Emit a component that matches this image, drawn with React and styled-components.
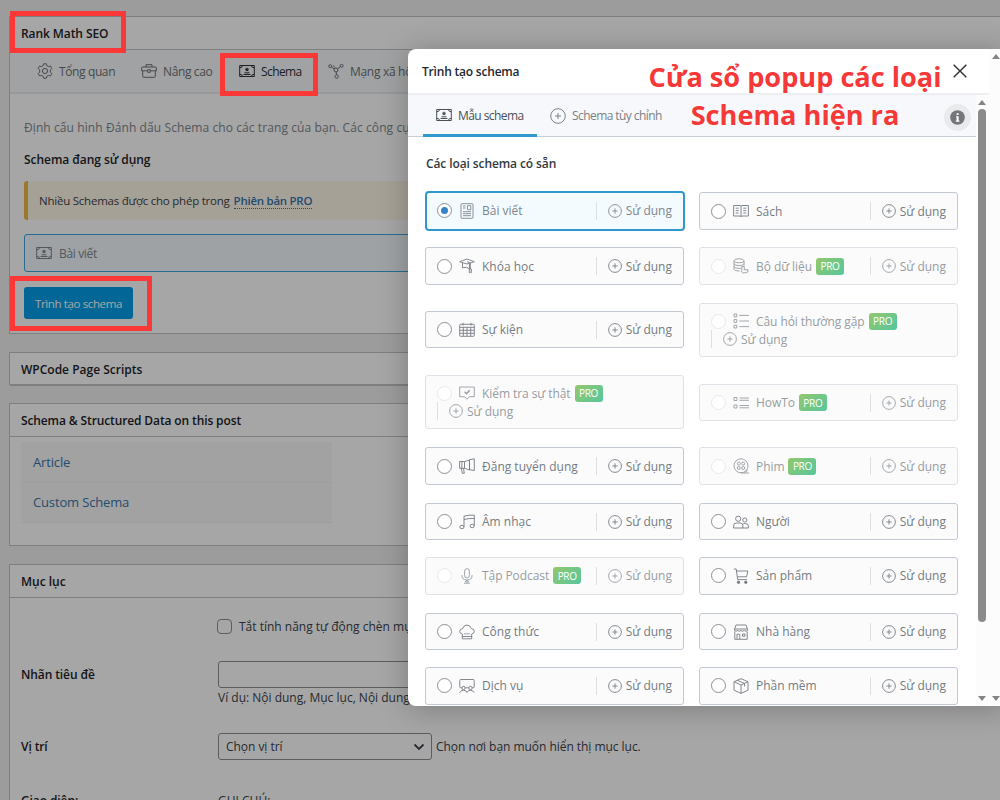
import React from 'react'
import styled, { createGlobalStyle, css } from 'styled-components'

const GlobalStyle = createGlobalStyle`
  * {
    box-sizing: border-box;
  }
  body {
    margin: 0;
    background: #f0f0f1;
    font-family: 'Open Sans', 'Noto Sans', sans-serif;
    font-size: 12px;
    color: #3c434a;
    overflow: hidden;
  }
`

const Screen = styled.div`
  position: relative;
  width: 1000px;
  height: 800px;
  overflow: hidden;
  white-space: nowrap;
`

const Page = styled.div`
  display: flex;
  flex-direction: column;
  gap: 18px;
  padding: 16px 0 0 9px;
`

const MetaBox = styled.section`
  flex: none;
  width: 1010px;
  height: ${props => props.$height}px;
  background: #fff;
  border: 1px solid #c3c4c7;
`

const BoxTitle = styled.h2`
  display: flex;
  align-items: center;
  height: 33px;
  margin: 0;
  padding-left: 11px;
  border-bottom: 1px solid #c3c4c7;
  font-size: 12px;
  font-weight: 600;
  letter-spacing: ${props => props.$spacing || 0}px;
  color: #1d2327;
`

const PanelTabs = styled.nav`
  display: flex;
  align-items: center;
  height: 44px;
  padding-left: 27px;
  background: #f8f9fa;
  border-bottom: 2px solid #e9eaec;
`

const PanelTab = styled.span`
  display: flex;
  align-items: center;
  gap: 6px;
  width: ${props => props.$width}px;
  color: ${props => (props.$active ? '#2c3338' : '#6c7278')};
  letter-spacing: ${props => props.$spacing || 0}px;
`

const PanelBody = styled.div`
  padding: 24px 0 0 14px;
`

const Intro = styled.p`
  margin: 0;
  line-height: 19px;
  color: #7f868d;
  letter-spacing: 0.09px;
`

const SubTitle = styled.h4`
  margin: 13px 0 0;
  font-size: 12px;
  font-weight: 600;
  line-height: 19px;
  letter-spacing: -0.05px;
  color: #1d2327;
`

const Notice = styled.div`
  display: flex;
  align-items: center;
  gap: 4px;
  height: 39px;
  margin-top: 12px;
  padding-left: 11px;
  font-size: 11.5px;
  letter-spacing: -0.23px;
  background: #fff8e9;
  border-left: 4px solid #eeb944;
  border-radius: 3px;
`

const ProLink = styled.a`
  color: #3573ad;
  font-weight: 600;
  line-height: 15px;
  letter-spacing: -0.27px;
  border-bottom: 1px dotted #3573ad;
`

const UsedSchema = styled.div`
  display: flex;
  align-items: center;
  gap: 7px;
  height: 38px;
  margin-top: 14px;
  padding-left: 11px;
  letter-spacing: -0.35px;
  color: #7f868d;
  background: #f3f9fd;
  border: 1px solid #3aa8dd;
  border-radius: 3px;
`

const PrimaryButton = styled.button`
  width: 109px;
  height: 32px;
  margin-top: 15px;
  padding: 0;
  color: #fff;
  font: inherit;
  font-size: 11.5px;
  letter-spacing: -0.37px;
  background: #049ee6;
  border: 0;
  border-radius: 3px;
`

const SchemaList = styled.ul`
  width: 311px;
  margin: 5px 0 0 11px;
  padding: 0;
  list-style: none;
  background: #f9f9f9;
`

const SchemaLink = styled.li`
  display: flex;
  align-items: center;
  height: 40.5px;
  padding-left: 12px;
  font-size: 13px;
  letter-spacing: -0.15px;
  color: #3976a9;
  border-bottom: 1px solid #f2f2f2;
`

const FieldRow = styled.div`
  display: grid;
  grid-template-columns: 197px 1fr;
  align-items: center;
  height: ${props => props.$height}px;
  margin-top: ${props => props.$top || 0}px;
  padding-left: 11px;
`

const FieldLabel = styled.span`
  font-weight: 600;
  letter-spacing: -0.1px;
  color: #1d2327;
`

const FieldValue = styled.div`
  display: flex;
  align-items: center;
  gap: ${props => props.$gap || 0}px;
  letter-spacing: ${props => props.$spacing || 0}px;
`

const CheckBox = styled.span`
  width: 15px;
  height: 15px;
  margin-left: -1px;
  background: #fff;
  border: 1px solid #8c8f94;
  border-radius: 4px;
`

const TextField = styled.span`
  width: 500px;
  height: 27px;
  background: #fff;
  border: 1px solid #8c8f94;
  border-radius: 3px;
`

const Hint = styled.div`
  height: 18px;
  padding-left: 208px;
  line-height: 19px;
`

const SelectField = styled.span`
  display: flex;
  align-items: center;
  justify-content: space-between;
  width: 214px;
  height: 27px;
  padding: 0 6px 0 7px;
  background: #fff;
  border: 1px solid #8c8f94;
  border-radius: 3px;
`

const Overlay = styled.div`
  position: absolute;
  inset: 0;
  background: rgba(0, 0, 0, 0.35);
`

const Modal = styled.div`
  position: absolute;
  top: 49px;
  left: 408px;
  display: flex;
  width: 600px;
  height: 657px;
  overflow: hidden;
  background: #fff;
  border-radius: 8px;
`

const ModalShadow = styled.div`
  position: absolute;
  top: 49px;
  left: 408px;
  width: 600px;
  height: 657px;
  border-radius: 8px;
  box-shadow: 0 3px 30px rgba(0, 0, 0, 0.25);
`

const ModalMain = styled.div`
  flex: none;
  width: 581px;
`

const ModalHeader = styled.header`
  display: flex;
  align-items: center;
  justify-content: space-between;
  height: 46px;
  padding: 0 22px 0 14px;
  border-bottom: 2px solid #eceef1;
`

const ModalTitle = styled.h3`
  margin: 0;
  font-size: 12px;
  font-weight: 600;
  letter-spacing: -0.2px;
  color: #23282d;
`

const ModalScroll = styled.div`
  display: flex;
  height: 611px;
`

const ModalContent = styled.div`
  width: 568px;
  height: 611px;
  overflow: hidden;
`

const ModalTabs = styled.nav`
  display: flex;
  align-items: stretch;
  height: 42px;
  padding: 0 5px 0 15px;
  background: #f7f8fb;
  border-bottom: 1px solid #c9cfd7;
`

const ModalTab = styled.span`
  display: flex;
  align-items: center;
  gap: 6px;
  height: 42px;
  width: ${props => props.$width}px;
  padding: 0 0 1px 13px;
  letter-spacing: -0.57px;
  color: ${props => (props.$active ? '#4a5056' : '#7b8187')};
  ${props =>
    props.$active &&
    css`
      padding-top: 2px;
      border-bottom: 3px solid #2f98cd;
    `}
`

const InfoButton = styled.span`
  display: flex;
  align-items: center;
  justify-content: center;
  align-self: center;
  width: 27px;
  height: 27px;
  margin: 4px 0 0 auto;
  background: #e9eaec;
  border-radius: 50%;
`

const SectionTitle = styled.h4`
  margin: 17px 0 0 18px;
  font-size: 12px;
  font-weight: 600;
  line-height: 19px;
  letter-spacing: -0.1px;
  color: #33393f;
`

const CardGrid = styled.div`
  display: grid;
  grid-template-columns: 259px 259px;
  grid-template-rows: 38px 38.4px 55.2px 55.4px 38.6px 37.4px 38.6px 37.4px 37.3px;
  column-gap: 15px;
  row-gap: 17px;
  padding: 19.4px 0 0 17px;
`

const Card = styled.div`
  display: flex;
  flex-wrap: wrap;
  align-content: center;
  align-self: ${props => (props.$centered ? 'center' : 'start')};
  min-height: ${props => (props.$tall ? 54.5 : 37.3)}px;
  margin-bottom: ${props => props.$lift || 0}px;
  padding: 0 11px;
  color: #757b82;
  background: #fbfbfc;
  border: 1px solid #c3c9d1;
  border-radius: 3px;
  ${props =>
    props.$locked &&
    css`
      color: #989da1;
      letter-spacing: -0.07px;
      border-color: #dfe2e6;
    `}
  ${props =>
    props.$selected &&
    css`
      height: 39.6px;
      margin: -1.4px -1px 0 0;
      padding: 0 11px 0 10px;
      color: #7f868d;
      background: #f3fbff;
      border: 2px solid #2f98cd;
      border-radius: 4px;
    `}
`

const CardLabel = styled.span`
  display: flex;
  flex: 1;
  align-items: center;
  height: 18px;

  svg {
    margin: 0 7px;
  }
`

const Radio = styled.span`
  display: flex;
  flex: none;
  align-items: center;
  justify-content: center;
  width: 15px;
  height: 15px;
  background: #fff;
  border: 1px solid ${props => (props.$locked ? '#e8e9eb' : '#8c9096')};
  border-radius: 50%;
`

const RadioDot = styled.span`
  width: 7px;
  height: 7px;
  background: #3582c4;
  border-radius: 50%;
`

const ProBadge = styled.span`
  display: flex;
  align-items: center;
  justify-content: center;
  width: 28px;
  height: 17px;
  margin-left: 4px;
  font-size: 10px;
  font-weight: 500;
  letter-spacing: -0.3px;
  color: #fff;
  background: linear-gradient(135deg, #95c76c, #55c79d);
  border-radius: 3px;
`

const UseAction = styled.span`
  display: flex;
  flex: ${props => (props.$wrapped ? '0 0 100%' : 'none')};
  align-items: center;
  gap: 4px;
  height: 18px;
  padding-left: 11px;
  letter-spacing: 0;
  border-left: 1px solid #dddfe2;
`

const ScrollTrack = styled.div`
  display: flex;
  flex-direction: column;
  align-items: center;
  justify-content: space-between;
  flex: none;
  width: 13px;
  height: ${props => props.$height}px;
  padding: 5px ${props => props.$inset || 0}px 5px 0;
  background: #fcfcfc;
`

const Arrow = styled.span`
  width: 0;
  height: 0;
  border: 4px solid transparent;
  border-top-width: ${props => (props.$up ? 0 : 5)}px;
  border-bottom-width: ${props => (props.$up ? 5 : 0)}px;
  border-${props => (props.$up ? 'bottom' : 'top')}-color: #858585;
`

const Thumb = styled.span`
  width: 8px;
  height: 513px;
  margin-bottom: auto;
  margin-top: 4px;
  background: #8b8b8b;
  border-radius: 4px;
`

const Marker = styled.div`
  position: absolute;
  top: ${props => props.$top}px;
  left: ${props => props.$left}px;
  width: ${props => props.$width}px;
  height: ${props => props.$height}px;
  border: 5px solid #fb3838;
`

const Caption = styled.div`
  position: absolute;
  top: 58px;
  left: 645px;
  width: 300px;
  font-family: 'Open Sans', sans-serif;
  font-size: 27.15px;
  font-weight: 700;
  line-height: 38px;
  text-align: center;
  color: #f73838;
`

const Svg = styled.svg`
  flex: none;
  fill: none;
  stroke: currentColor;
  stroke-width: ${props => props.$weight || 1};
`

const icons = {
  gear: (
    <>
      <path d='M6.6.8h2.8l.5 2 1.500.8 2-.6 1.400 2.400-1.500 1.500v2.200l1.500 1.500-1.400 2.400-2-.6-1.500.8-.5 2H6.600l-.5-2-1.500-.8-2 .6-1.400-2.400 1.500-1.500V6.900L1.200 5.400 2.600 3l2 .6 1.500-.8z' />
      <circle cx='8' cy='8' r='2.6' />
    </>
  ),
  briefcase: (
    <>
      <path d='M.7 8V4.800q0-.8.800-.8h13q.8 0 .8.800V8M.7 7.800h6M9.300 7.800h6' />
      <path d='M1.700 8v5.500q0 .8.800.8h11q.8 0 .8-.8V8M5 4V1.700h6V4M6.700 6.700h2.600v2.600H6.700z' />
    </>
  ),
  schema: (
    <>
      <path d='M.7 2.500h14.600v11H.7z' />
      <path d='M3.500 2.700q0 2-2.600 2M12.500 2.700q0 2 2.600 2M3.500 13.300q0-2-2.600-2M12.500 13.300q0-2 2.600-2M4.500 11.500h7M5.500 9.800h5' />
      <path d='M8 4.300l.7 1.300 1.500.2-1 1.100.2 1.500L8 7.800l-1.400.6.2-1.500-1-1.100 1.500-.2z' fill='currentColor' stroke='none' />
    </>
  ),
  network: (
    <>
      <circle cx='2.200' cy='3.200' r='1.500' />
      <circle cx='13.600' cy='2.800' r='1.500' />
      <circle cx='8' cy='7' r='2' />
      <circle cx='8.700' cy='13.500' r='1.700' />
      <path d='M3.500 4l2.800 2M12.300 3.700L9.700 5.800M8.200 9l.3 2.800M5.400 2.500l1.400 2' />
    </>
  ),
  article: (
    <>
      <rect x='2' y='.7' width='12' height='14.600' rx='1' />
      <path d='M8.500 2.700h3.300v4H8.500zM4 3h2.500M4 5h2.500M4 8.700h8M4 10.700h8M4 12.700h8' />
    </>
  ),
  book: (
    <>
      <path d='M.6 2.500h6.500l.9.700.9-.7h6.500v10.500H8.900l-.9.700-.9-.7H.6zM8 3.200v10.300' />
      <path d='M2.700 5.200h3M2.700 7.600h3M2.700 10h3M10.300 5.200h3M10.300 7.600h3M10.300 10h3' />
    </>
  ),
  course: (
    <>
      <path d='M.7 3.700L8 1l7.300 2.700L8 6zM3.500 4.800v5q4.500-1.500 7 1V5.600M8 3.600l3.300 1.400v6' />
      <path d='M10.300 11h2v3.800l-1-.7-1 .7z' />
    </>
  ),
  dataset: (
    <>
      <ellipse cx='6' cy='2.800' rx='5' ry='2' />
      <path d='M1 2.800v8.400q0 1.800 5 1.800h.8M11 2.800v4.800M1 5.600q0 2 5 2t5-2M1 8.400q0 2 5 2l2.500-.2' />
      <path d='M8.800 8.500h2.500v3.300h3.800q.3 3-2 3H9.500q-1.600-.6-.7-2.300z' />
    </>
  ),
  event: (
    <>
      <rect x='.7' y='2.300' width='14.600' height='12' rx='.8' />
      <path d='M.7 5.300h14.600M.7 8.300h14.600M.7 11.300h14.600M4.300 5v9M8 5v9M11.700 5v9M4 .8v2.700M12 .8v2.700' />
    </>
  ),
  faq: (
    <>
      <path d='M1 1h2.800v2.800H1zM1 6.600h2.800v2.800H1zM1 12.200h2.800V15H1z' />
      <path d='M6.300 2.400H16M6.300 8H16M6.300 13.600H16' />
    </>
  ),
  factcheck: (
    <>
      <path d='M.7 2h14.600v9.700h-4.800L8 14.200l-2.500-2.500H.7z' />
      <path d='M5.600 6.800l1.900 1.900 3.200-3.500' strokeWidth='1.400' />
    </>
  ),
  howto: (
    <>
      <path d='M1 2.500h3v3H1zM1 10h3v3H1z' />
      <path d='M6.500 3H16M6.500 5.300H16M6.500 10.500H16M6.500 12.800H16' />
    </>
  ),
  job: (
    <>
      <path d='M.6 3.500h4.900v6.800H.6zM5.500 3.500l5-1.300v9.800l-5-1.700M10.500 1.700l4.800-.9v11.700l-4.800-.8zM2.200 10.300l1.200 5h1.900l-.8-5M2.900 3.700v6.400' />
    </>
  ),
  movie: (
    <>
      <circle cx='8' cy='7.800' r='7' />
      <circle cx='5.800' cy='5.600' r='1.500' />
      <circle cx='10.200' cy='5.600' r='1.500' />
      <circle cx='5.800' cy='10' r='1.500' />
      <circle cx='10.200' cy='10' r='1.500' />
      <path d='M8 15h8M14.500 11.800q-.8 2-2.800 3' />
    </>
  ),
  music: (
    <>
      <path d='M5 12.700V2.200q5-1.500 10.300-1v10.600M5 5.500q5-1.400 10.300-1' />
      <ellipse cx='2.900' cy='13' rx='2.100' ry='1.700' />
      <ellipse cx='13.200' cy='12' rx='2.100' ry='1.700' />
    </>
  ),
  person: (
    <>
      <circle cx='5.200' cy='4.700' r='2.600' />
      <circle cx='11.800' cy='6' r='2.100' />
      <path d='M.6 14v-2.300q0-2.700 2.700-2.700h4q2.600 0 2.600 2.700V14zM10 10.200q.5-.6 1.400-.6h1.400q2.600 0 2.600 2.600V14H9.900' />
    </>
  ),
  podcast: (
    <>
      <rect x='5.600' y='.7' width='4.800' height='9.300' rx='2.400' />
      <path d='M3 7v1q0 4 5 4t5-4V7M8 12v3.200M5 15.200h6M6 14l2-1.500L10 14' />
    </>
  ),
  product: (
    <>
      <path d='M.8 1h2.400l1.500 10.600h9.400M3.500 3h11.300l-1.200 5.800H4.400' />
      <circle cx='5.500' cy='14.300' r='1.200' fill='currentColor' />
      <circle cx='12.800' cy='14.300' r='1.200' fill='currentColor' />
    </>
  ),
  recipe: (
    <>
      <path d='M3.300 14.800V10Q.7 9.500.7 7.200q.2-2.400 2.900-2.500Q4.800 1 8 1t4.400 3.700q2.700.1 2.900 2.500 0 2.300-2.600 2.800v4.800zM3.300 12.500h9.400M6 9v1.500M8 9v1.500M10 9v1.500' />
    </>
  ),
  restaurant: (
    <>
      <path d='M3 1h10l1.500 4.300v1.200q-1.600 1.500-3.250 0-1.600 1.500-3.250 0-1.600 1.500-3.250 0-1.600 1.500-3.250 0V5.300zM1.500 5h13M1.800 7.500v7.800h12.400V7.500' />
      <path d='M4 15v-4.800h2.800V15M9.500 10h2.500v2.200H9.500z' />
    </>
  ),
  service: (
    <>
      <path d='M2.800 9.800h-1q-1 0-1-1V2.500q0-1 1-1h12.400q1 0 1 1v6.300q0 1-1 1h-1M6.200 9.800h3.600' />
      <circle cx='4.500' cy='10' r='1.700' />
      <circle cx='11.500' cy='10' r='1.700' />
      <path d='M.8 14.700q1-2.500 3.700-2.500t3.500 2.300q1-2.300 3.500-2.300t3.700 2.500' />
    </>
  ),
  software: (
    <>
      <path d='M8 .7l7 3v8.500l-7 3.200-7-3.200V3.700zM1 3.700L8 7l7-3.300M8 7v8.300M4.500 2.300l7 3.200v3' />
    </>
  ),
  plus: (
    <>
      <circle cx='8' cy='8' r='7.300' />
      <path d='M8 5v6M5 8h6' />
    </>
  )
}

const Icon = ({ name, size = 16, weight }) => (
  <Svg width={size} height={size} viewBox='0 0 16 16' $weight={weight}>
    {icons[name]}
  </Svg>
)

const schemas = [
  { icon: 'article', label: 'Bài viết', selected: true },
  { icon: 'book', label: 'Sách' },
  { icon: 'course', label: 'Khóa học' },
  { icon: 'dataset', label: 'Bộ dữ liệu', pro: true },
  { icon: 'event', label: 'Sự kiện', centered: true, lift: 1.6 },
  { icon: 'faq', label: 'Câu hỏi thường gặp', pro: true, tall: true },
  { icon: 'factcheck', label: 'Kiểm tra sự thật', pro: true, tall: true },
  { icon: 'howto', label: 'HowTo', pro: true, centered: true },
  { icon: 'job', label: 'Đăng tuyển dụng' },
  { icon: 'movie', label: 'Phim', pro: true },
  { icon: 'music', label: 'Âm nhạc' },
  { icon: 'person', label: 'Người' },
  { icon: 'podcast', label: 'Tập Podcast', pro: true },
  { icon: 'product', label: 'Sản phẩm' },
  { icon: 'recipe', label: 'Công thức' },
  { icon: 'restaurant', label: 'Nhà hàng' },
  { icon: 'service', label: 'Dịch vụ' },
  { icon: 'software', label: 'Phần mềm' }
]

const SchemaCard = ({ icon, label, pro, tall, centered, lift, selected }) => (
  <Card
    $locked={pro}
    $tall={tall}
    $centered={centered}
    $lift={lift}
    $selected={selected}
  >
    <CardLabel>
      <Radio $locked={pro}>{selected && <RadioDot />}</Radio>
      <Icon name={icon} weight={0.9} />
      {label}
      {pro && <ProBadge>PRO</ProBadge>}
    </CardLabel>
    <UseAction $wrapped={tall}>
      <Icon name='plus' size={14} />
      Sử dụng
    </UseAction>
  </Card>
)

const SchemaModal = () => (
  <Modal>
    <ModalMain>
      <ModalHeader>
        <ModalTitle>Trình tạo schema</ModalTitle>
        <Svg width='14' height='14' viewBox='0 0 14 14' $weight={1.4} color='#2c3035'>
          <path d='M.7.700l12.600 12.600M13.300.700L.7 13.300' />
        </Svg>
      </ModalHeader>
      <ModalScroll>
        <ModalContent>
          <ModalTabs>
            <ModalTab $active $width={114}>
              <Icon name='schema' />
              Mẫu schema
            </ModalTab>
            <ModalTab $width={140}>
              <Icon name='plus' />
              Schema tùy chỉnh
            </ModalTab>
            <InfoButton>
              <svg width='15' height='15' viewBox='0 0 15 15'>
                <circle cx='7.5' cy='7.5' r='7.3' fill='#73777b' />
                <path d='M6.600 3.200h2v1.700h-2zM6 6.200h2.600v4.300h.8v1.200H5.800v-1.200h.8V7.300H6z' fill='#fff' />
              </svg>
            </InfoButton>
          </ModalTabs>
          <SectionTitle>Các loại schema có sẵn</SectionTitle>
          <CardGrid>
            {schemas.map(schema => (
              <SchemaCard key={schema.icon} {...schema} />
            ))}
          </CardGrid>
        </ModalContent>
        <ScrollTrack $height={611} $inset={1}>
          <Arrow $up />
          <Thumb />
          <Arrow />
        </ScrollTrack>
      </ModalScroll>
    </ModalMain>
    <ScrollTrack $height={657}>
      <Arrow $up />
      <Arrow />
    </ScrollTrack>
  </Modal>
)

const App = () => (
  <Screen>
    <GlobalStyle />
    <Page>
      <MetaBox $height={318}>
        <BoxTitle $spacing={-0.08}>Rank Math SEO</BoxTitle>
        <PanelTabs>
          <PanelTab $width={104} $spacing={-0.38}>
            <Icon name='gear' />
            Tổng quan
          </PanelTab>
          <PanelTab $width={98} $spacing={-0.38}>
            <Icon name='briefcase' />
            Nâng cao
          </PanelTab>
          <PanelTab $width={89} $spacing={-0.6} $active>
            <Icon name='schema' />
            Schema
          </PanelTab>
          <PanelTab $width={110} $spacing={-0.3}>
            <Icon name='network' />
            Mạng xã hội
          </PanelTab>
        </PanelTabs>
        <PanelBody>
          <Intro>Định cấu hình Đánh dấu Schema cho các trang của bạn. Các công cụ tìm kiếm</Intro>
          <SubTitle>Schema đang sử dụng</SubTitle>
          <Notice>
            Nhiều Schemas được cho phép trong
            <ProLink>Phiên bản PRO</ProLink>
          </Notice>
          <UsedSchema>
            <Icon name='schema' />
            Bài viết
          </UsedSchema>
          <PrimaryButton>Trình tạo schema</PrimaryButton>
        </PanelBody>
      </MetaBox>
      <MetaBox $height={33}>
        <BoxTitle>WPCode Page Scripts</BoxTitle>
      </MetaBox>
      <MetaBox $height={143}>
        <BoxTitle $spacing={-0.12}>Schema &amp; Structured Data on this post</BoxTitle>
        <SchemaList>
          <SchemaLink>Article</SchemaLink>
          <SchemaLink>Custom Schema</SchemaLink>
        </SchemaList>
      </MetaBox>
      <MetaBox $height={300}>
        <BoxTitle>Mục lục</BoxTitle>
        <FieldRow $height={20} $top={18}>
          <span />
          <FieldValue $gap={7}>
            <CheckBox />
            Tắt tính năng tự động chèn mục lục
          </FieldValue>
        </FieldRow>
        <FieldRow $height={27} $top={25}>
          <FieldLabel>Nhãn tiêu đề</FieldLabel>
          <TextField />
        </FieldRow>
        <Hint>Ví dụ: Nội dung, Mục lục, Nội dung chính</Hint>
        <FieldRow $height={27} $top={27}>
          <FieldLabel>Vị trí</FieldLabel>
          <FieldValue $gap={4} $spacing={-0.04}>
            <SelectField>
              Chọn vị trí
              <Svg width='12' height='12' viewBox='0 0 12 12' $weight={1.800}>
                <path d='M1.500 3.500L6 8l4.500-4.500' />
              </Svg>
            </SelectField>
            Chọn nơi bạn muốn hiển thị mục lục.
          </FieldValue>
        </FieldRow>
        <FieldRow $height={20} $top={30}>
          <FieldLabel>Giao diện:</FieldLabel>
          <span>GHI CHÚ:</span>
        </FieldRow>
      </MetaBox>
    </Page>
    <Overlay />
    <ModalShadow />
    <SchemaModal />
    <Marker $top={11} $left={10} $width={116} $height={42} />
    <Marker $top={53} $left={220} $width={98} $height={43} />
    <Marker $top={276} $left={10} $width={142} $height={55} />
    <Caption>
      Cửa sổ popup các loại
      <br />
      Schema hiện ra
    </Caption>
  </Screen>
)

export default App
